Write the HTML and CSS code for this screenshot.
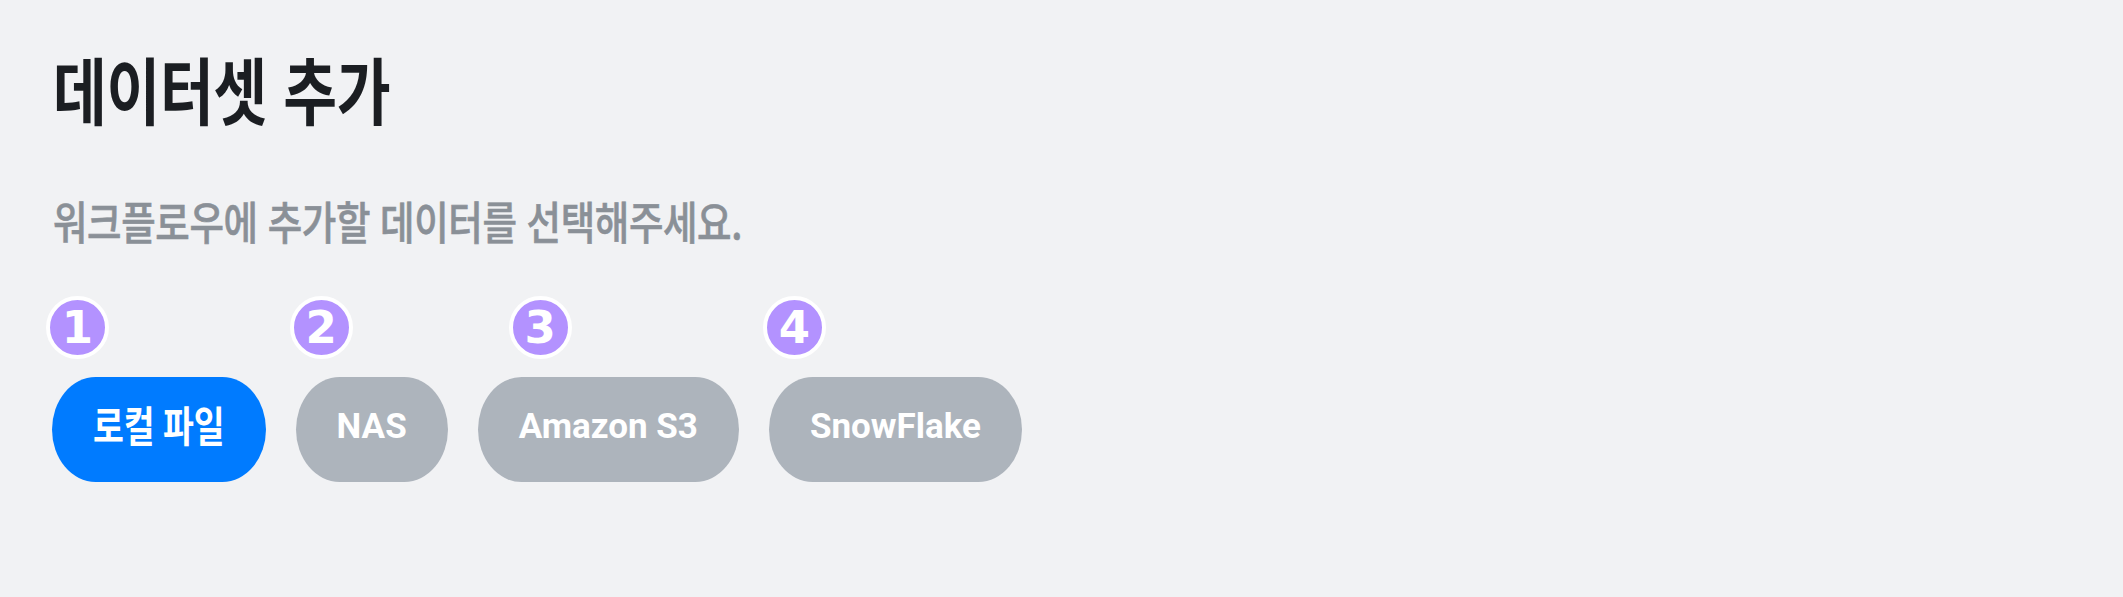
FILE: index.html
```html
<!DOCTYPE html>
<html lang="ko">
<head>
<meta charset="utf-8">
<title>데이터셋 추가</title>
<link rel="stylesheet" href="styles.css">
</head>
<body>
<main class="page">
  <h1 class="title"><span class="tall">데이터셋 추가</span></h1>
  <p class="desc"><span class="tall">워크플로우에 추가할 데이터를 선택해주세요.</span></p>
  <div class="sources">
    <div class="source">
      <span class="marker">1</span>
      <button class="chip chip--active" type="button"><span class="tall">로컬 파일</span></button>
    </div>
    <div class="source">
      <span class="marker">2</span>
      <button class="chip" type="button">NAS</button>
    </div>
    <div class="source">
      <span class="marker marker--shift">3</span>
      <button class="chip" type="button">Amazon S3</button>
    </div>
    <div class="source">
      <span class="marker">4</span>
      <button class="chip" type="button">SnowFlake</button>
    </div>
  </div>
</main>
</body>
</html>
```
FILE: styles.css
```css
* { box-sizing: border-box; }

html, body {
  margin: 0;
  padding: 0;
  background: #f1f2f4;
}

body {
  font-family: "Noto Sans CJK KR", "Noto Sans", sans-serif;
  color: #212529;
}

.page {
  padding: 48px 0 0 52px;
}

.tall {
  display: inline-block;
  transform: scaleY(1.24);
  transform-origin: center;
}

.title {
  margin: 0;
  padding-left: 1px;
  font-size: 58.5px;
  font-weight: 700;
  line-height: 80px;
  letter-spacing: -0.3px;
  color: #1b1e22;
}

.desc {
  margin: 68px 0 0;
  padding-left: 1px;
  font-size: 37.5px;
  font-weight: 500;
  line-height: 50px;
  letter-spacing: -0.4px;
  color: #8a9097;
  -webkit-text-stroke: 0.5px #8a9097;
}

.desc .tall {
  transform: scaleY(1.2);
}

.sources {
  display: flex;
  gap: 30px;
  margin-top: 50px;
}

.source {
  display: flex;
  flex-direction: column;
  align-items: flex-start;
  gap: 18px;
}

.marker {
  display: flex;
  align-items: center;
  justify-content: center;
  width: 63px;
  height: 63px;
  margin-left: -6px;
  border: 4px solid #ffffff;
  border-radius: 50%;
  background: #b392ff;
  color: #ffffff;
  font-family: "DejaVu Sans", sans-serif;
  font-weight: 700;
  font-size: 45px;
  line-height: 1;
}

.marker--shift {
  margin-left: 31px;
}

.chip {
  display: flex;
  align-items: center;
  justify-content: center;
  height: 105px;
  padding: 0 41px 6px;
  border: 0;
  border-radius: 44px / 53px;
  background: #adb4bc;
  color: #ffffff;
  font-family: Roboto, "Noto Sans CJK KR", sans-serif;
  font-weight: 700;
  font-size: 35px;
  line-height: 1;
}

.chip--active {
  background: #007bff;
  font-size: 33.5px;
  padding-bottom: 4px;
}
```
